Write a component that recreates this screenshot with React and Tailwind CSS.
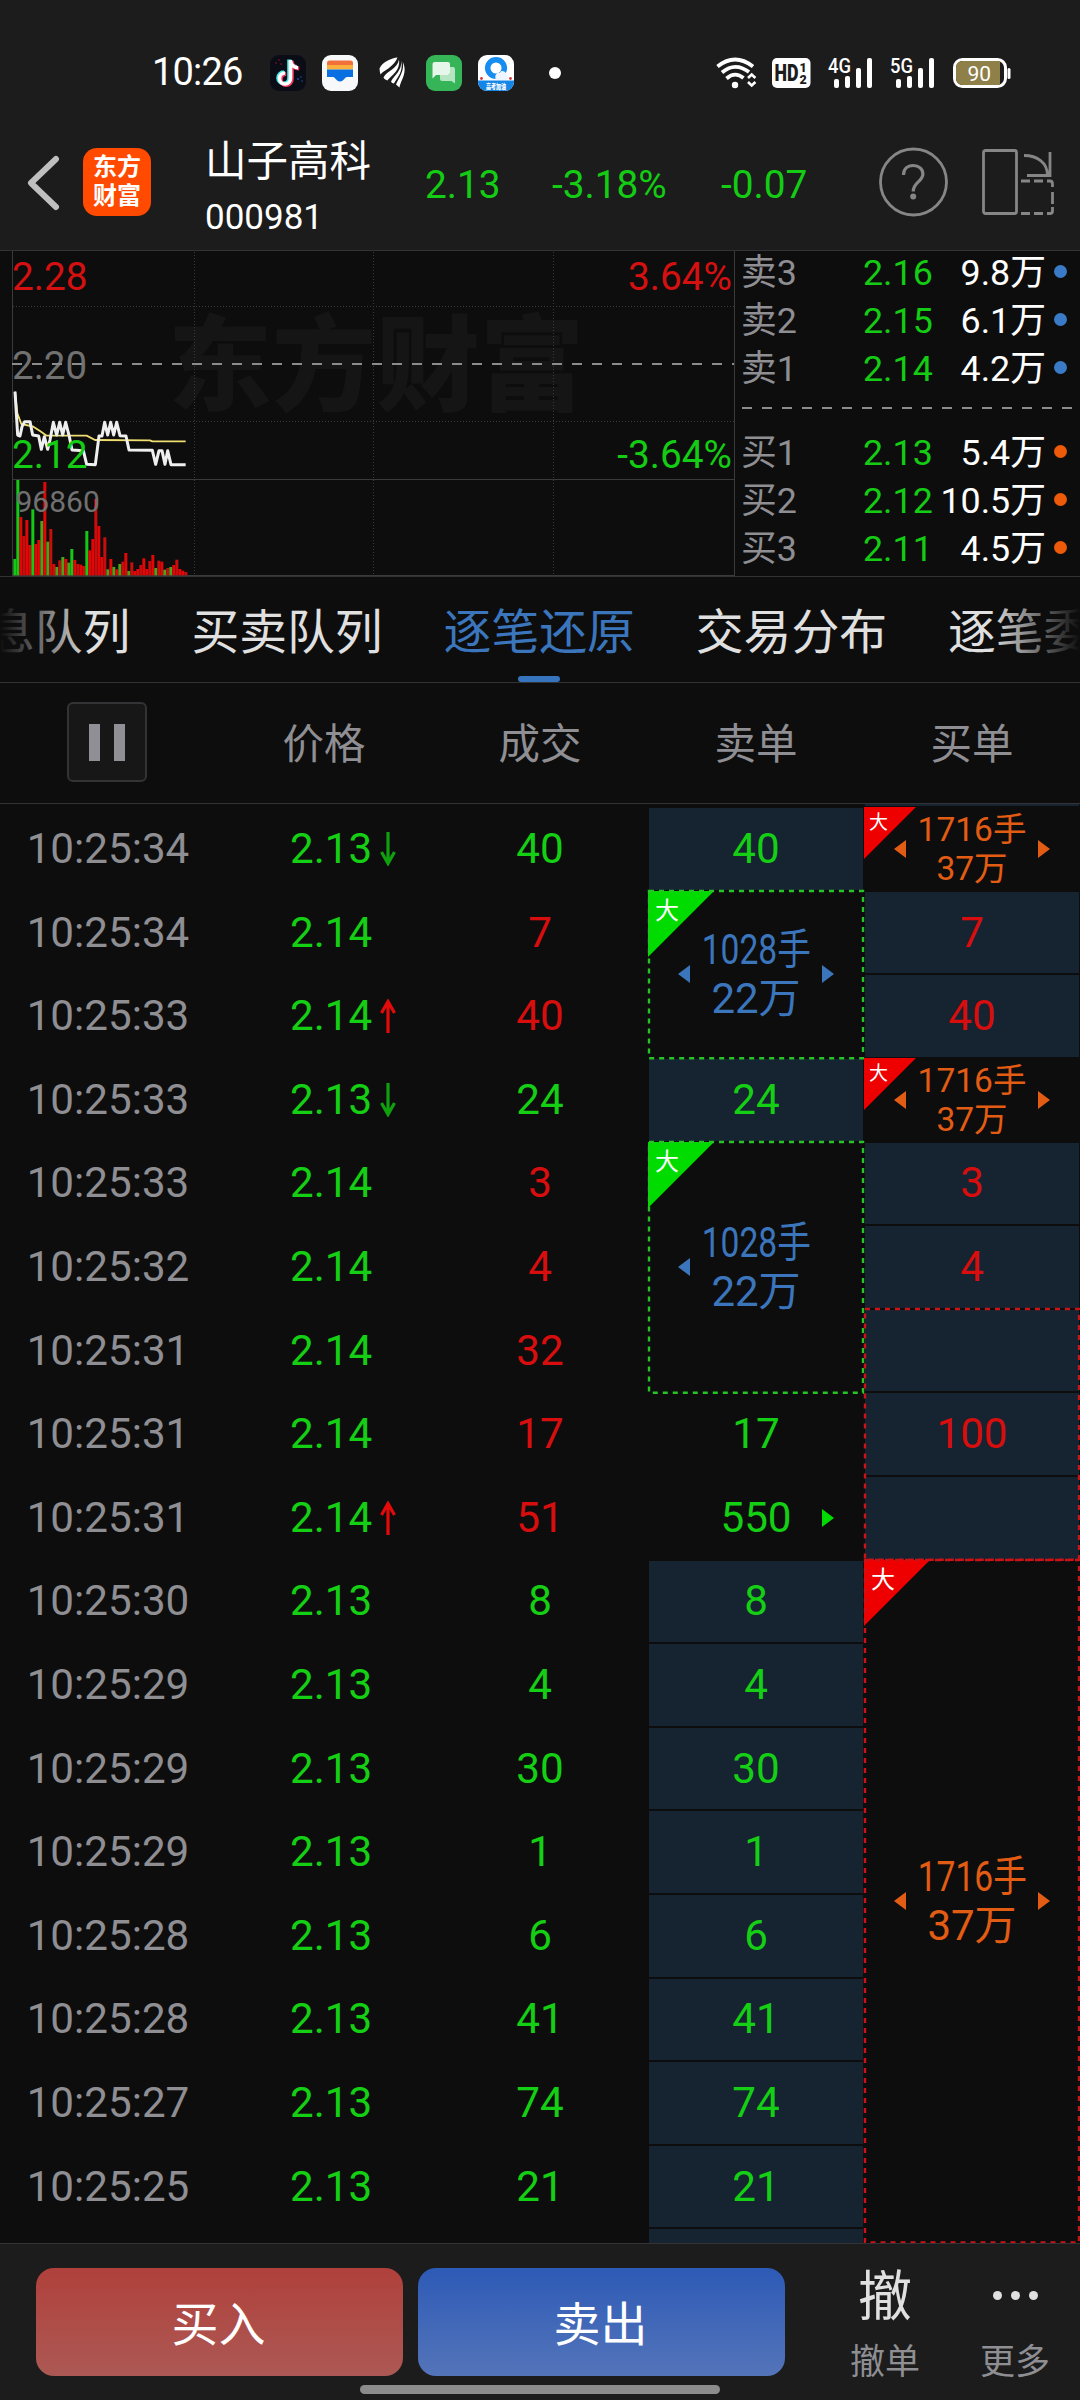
import React from "react";

const VOLUME = [
  ["g", 957], ["g", 720], ["r", 831], ["r", 888], ["r", 840], ["r", 915], ["g", 808], ["r", 912], ["r", 900], ["g", 843],
  ["r", 726], ["g", 905], ["r", 867], ["r", 972], ["g", 981], ["r", 961], ["g", 951], ["r", 957], ["g", 968], ["g", 927],
  ["r", 960], ["r", 972], ["r", 974], ["r", 978], ["g", 873], ["r", 931], ["r", 897], ["r", 777], ["r", 858], ["r", 951],
  ["r", 892], ["g", 988], ["r", 957], ["g", 981], ["r", 988], ["g", 972], ["r", 965], ["r", 939], ["g", 993], ["r", 967],
  ["r", 993], ["r", 987], ["r", 975], ["r", 955], ["r", 987], ["r", 963], ["r", 945], ["g", 984], ["r", 962], ["r", 965],
  ["g", 989], ["r", 984], ["g", 981], ["r", 975], ["r", 959], ["r", 987], ["r", 992], ["r", 996],
];

const TRADES = [
  ["10:25:34", "2.13", "down", "40", "g"],
  ["10:25:34", "2.14", "", "7", "r"],
  ["10:25:33", "2.14", "up", "40", "r"],
  ["10:25:33", "2.13", "down", "24", "g"],
  ["10:25:33", "2.14", "", "3", "r"],
  ["10:25:32", "2.14", "", "4", "r"],
  ["10:25:31", "2.14", "", "32", "r"],
  ["10:25:31", "2.14", "", "17", "r"],
  ["10:25:31", "2.14", "up", "51", "r"],
  ["10:25:30", "2.13", "", "8", "g"],
  ["10:25:29", "2.13", "", "4", "g"],
  ["10:25:29", "2.13", "", "30", "g"],
  ["10:25:29", "2.13", "", "1", "g"],
  ["10:25:28", "2.13", "", "6", "g"],
  ["10:25:28", "2.13", "", "41", "g"],
  ["10:25:27", "2.13", "", "74", "g"],
  ["10:25:25", "2.13", "", "21", "g"],
];

function Signal({ label }) {
  return (
    <svg width="46" height="32" viewBox="0 0 46 32" className="shrink-0">
      <text x="0" y="15.500" fontSize="19.500" fill="#fff" fontWeight="500" textLength="23" lengthAdjust="spacingAndGlyphs">{label}</text>
      <g fill="#fff">
        <rect x="6" y="22" width="5" height="9" rx="2" />
        <rect x="17" y="19" width="5" height="12" rx="2" />
        <rect x="28" y="11" width="5" height="20" rx="2" />
        <rect x="39" y="1" width="5" height="30" rx="2" />
      </g>
    </svg>
  );
}

function StatusBar() {
  return (
    <div className="relative flex h-[110px] items-center pt-[35px]">
      <div className="ml-[152px] w-[118px] text-[38px] leading-9 tracking-[-0.8px] text-white"><span className="relative -top-px">10:26</span></div>
      <svg width="36" height="36" viewBox="0 0 36 36" className="mr-4 shrink-0">
        <rect width="36" height="36" rx="9" fill="#0a0c16" />
        <g fill="none" strokeWidth="4.200">
          <path d="M20.500 5v18.500a5.500 5.500 0 1 1-5.500-5.500M20.500 6c.8 4.500 3.500 6.500 7.500 6.700" stroke="#3be8e6" transform="translate(-1.200 -.6)" />
          <path d="M20.500 5v18.500a5.500 5.500 0 1 1-5.500-5.500M20.500 6c.8 4.500 3.500 6.500 7.500 6.700" stroke="#f5355b" transform="translate(1.200 .8)" />
          <path d="M20.500 5v18.500a5.500 5.500 0 1 1-5.500-5.500M20.500 6c.8 4.500 3.500 6.500 7.500 6.700" stroke="#fff" strokeWidth="3.600" />
        </g>
        <g fill="#a01626"><circle cx="6" cy="8" r=".8" /><circle cx="9" cy="5" r=".8" /><circle cx="11" cy="9" r=".8" /></g>
        <g fill="#1d55b0"><circle cx="28" cy="24" r=".9" /><circle cx="31" cy="22" r=".8" /><circle cx="32" cy="26" r=".8" /></g>
      </svg>
      <svg width="36" height="36" viewBox="0 0 36 36" className="mr-[21px] shrink-0">
        <rect width="36" height="36" rx="9" fill="#f7f8fa" />
        <path d="M5 8q0-2.500 2.500-2.500h21q2.500 0 2.500 2.500v2H5z" fill="#f2703a" />
        <rect x="5" y="10" width="26" height="4.500" fill="#fbb03b" />
        <path d="M5 14.500h26V22h-6c-2.500 0-3 4.500-7 4.500S13.500 22 11 22H5z" fill="#0a6fe0" />
      </svg>
      <svg width="26" height="31" viewBox="0 0 26 31" className="mr-[21px] shrink-0">
        <path d="M18.500.5C13 1 3 5 .5 11.500c0 2 .5 4 1 6C5 13 15 10 18.500.5z" fill="#fff" />
        <path d="M20 2.500C18.500 12 8 13.500 4.500 20.500c1 1.800 2.500 2.500 4 3C12 18.500 21.500 14 20 2.500z" fill="#fff" />
        <path d="M22 3.500c1.500 9.500-6.500 14.500-10 21 1 1.500 1.500 1.700 3 2C18 21 25 14 22 3.500z" fill="#fff" />
        <path d="M23.800 5c1.500 9-3.500 15-6.800 22.500l3.500 3C21.500 23 29 16 23.800 5z" fill="#fff" />
      </svg>
      <svg width="36" height="36" viewBox="0 0 36 36" className="mr-4 shrink-0">
        <rect width="36" height="36" rx="9" fill="#36b558" />
        <path d="M9 7h13q2 0 2 2v9q0 2-2 2H10l-3.500 3.500V9q0-2 2.500-2z" fill="#e6f6ea" />
        <path d="M24 12h3q2 0 2 2v14.500L25.500 26H16q-2 0-2-2v-4h8q2 0 2-2z" fill="#b5e5c1" />
      </svg>
      <svg width="36" height="36" viewBox="0 0 36 36" className="shrink-0">
        <defs><clipPath id="browser"><rect width="36" height="36" rx="9" /></clipPath></defs>
        <g clipPath="url(#browser)">
          <rect width="36" height="36" fill="#fff" />
          <circle cx="18" cy="13" r="8.300" fill="none" stroke="#168df0" strokeWidth="5.500" />
          <path d="M18 25c-2-5 1-8 4-7 1-4 8-2 8 7z" fill="#eef5fc" />
          <rect y="25.500" width="36" height="11" fill="#1386e8" />
          <circle cx="3.500" cy="23.500" r="1.400" fill="#d23a3a" /><circle cx="32.500" cy="23.500" r="1.400" fill="#d23a3a" />
          <text x="8" y="33.500" fontSize="7" fontWeight="900" fill="#fff" textLength="20" lengthAdjust="spacingAndGlyphs">高考加油</text>
        </g>
      </svg>
      <div className="ml-[35px] size-3 rounded-full bg-white" />
      <svg width="42" height="32" viewBox="0 0 42 32" className="ml-[155px] shrink-0">
        <g fill="none" stroke="#fff" strokeWidth="3.800">
          <path d="M1.500 9.500Q19 -4.500 37 9.500" />
          <path d="M6 15.500Q19 4.500 33 15" />
          <path d="M10.500 21.500Q19 14 27.500 21" />
          <path d="M32 21l3.700-3.500L39.400 21M32 25l3.700 3.500L39.400 25" strokeWidth="2.600" />
        </g>
        <circle cx="19" cy="28" r="3.200" fill="#fff" />
      </svg>
      <svg width="40" height="32" viewBox="0 0 40 32" className="ml-[13px] shrink-0">
        <rect x="1" y="1" width="38.500" height="30" rx="5" fill="#fff" />
        <g fill="#1c1c1c" fontWeight="900">
          <text x="3.500" y="24" fontSize="23" textLength="24" lengthAdjust="spacingAndGlyphs">HD</text>
          <text x="28.500" y="14.500" fontSize="12.500">1</text>
          <text x="28.500" y="26.500" fontSize="12.500">2</text>
        </g>
      </svg>
      <div className="ml-[17px] flex w-[124px] gap-4"><Signal label="4G" /><Signal label="5G" /></div>
      <svg width="60" height="32" viewBox="0 0 60 32" className="shrink-0">
        <rect x="2.500" y="2.500" width="51" height="27" rx="8" fill="none" stroke="#fff" strokeWidth="3" />
        <path d="M48 4H11q-7 0-7 7v10q0 7 7 7h37z" fill="#8f7f49" />
        <rect x="55.500" y="11" width="3" height="11" rx="1.500" fill="#fff" />
        <text x="15.500" y="23.500" fontSize="21" fill="#fff">90</text>
      </svg>
    </div>
  );
}

function TitleBar() {
  return (
    <div className="flex h-[140px] items-start text-[38.8px] text-[#14cc14]">
      <svg width="34" height="58" viewBox="0 0 34 58" className="ml-[26px] mt-[44px] shrink-0">
        <path d="M30 5L5 29l25 24" fill="none" stroke="#bfbfbf" strokeWidth="6" strokeLinecap="round" strokeLinejoin="round" />
      </svg>
      <div className="ml-[23px] mt-[38px] h-[68px] w-[68px] shrink-0 rounded-[14px] bg-[#ff4a00] pt-[5px] text-center text-[24px] font-bold leading-[29px] text-white">
        <div>东方</div><div>财富</div>
      </div>
      <div className="ml-[54px] w-[220px] shrink-0 text-white">
        <div className="mt-[27px] text-[41.5px] leading-[50px]">山子高科</div>
        <div className="mt-[11px] text-[35px] leading-[40px]">000981</div>
      </div>
      <div className="mt-[53px] flex leading-[44px]">
        <div className="w-[127px] shrink-0">2.13</div>
        <div className="w-[169px] shrink-0">-3.18%</div>
        <div className="w-[158px] shrink-0">-0.07</div>
      </div>
      <svg width="70" height="70" viewBox="0 0 70 70" className="mt-[37px] shrink-0" fill="none" stroke="#868686">
        <circle cx="34.500" cy="35" r="33" strokeWidth="2.800" />
        <path d="M24.500 28c0-6 4-9.500 9.700-9.500s9.700 3.500 9.700 8.500c0 7.500-9.700 8-9.700 17.500" strokeWidth="3.200" />
        <circle cx="34.200" cy="49.500" r="3" fill="#868686" stroke="none" />
      </svg>
      <svg width="76" height="70" viewBox="0 0 76 70" className="ml-[31px] mt-[37px] shrink-0" fill="none" stroke="#868686" strokeWidth="2.800">
        <rect x="3.500" y="3.500" width="33" height="63" rx="2" />
        <path d="M44 8.500c13 0 23.500 7 23.500 20M70 5v23.500H47" />
        <path d="M41 34h9M54 34h9M41 66.500h9M54 66.500h9M67 34h3q2.500 0 2.500 3v3M72.500 45v12M72.500 60v4q0 2.500-2.500 2.500h-3" />
      </svg>
    </div>
  );
}

function Chart() {
  return (
    <svg width="735" height="326" viewBox="0 0 735 326" className="shrink-0">
      <text x="168" y="152" fontSize="104" fontWeight="900" fill="#151515">东方财富</text>
      <g fill="none" stroke="#3a3a3c" strokeWidth="1">
        <path d="M13 55.500H734M13 170.500H734M194.500 1V324M373.500 1V324M553.500 1V324" strokeDasharray="1 2" />
        <path d="M12.500 0V325M734.500 0V325M13 228.500H734M13 324.500H734" />
      </g>
      <text x="12" y="127.500" fontSize="38.500" fill="#717171">2.20</text>
      <path d="M12 113H734" stroke="#8c8c8c" strokeWidth="2" strokeDasharray="10 10" />
      <g transform="translate(0 -11) scale(.33333)" fill="none" strokeLinejoin="round">
        <path d="M45 455L52 520L64 552L100 560L120 573L140 587H260L285 600L450 601L457 604H557" stroke="#f0de70" strokeWidth="5.500" />
        <path d="M45 455L53 585L60 588L66 560L74 545H90L98 585L116 588L124 628L133 590L143 628L150 600L160 547L170 585L179 547L188 585L197 547L208 590L216 630L250 632L260 673L286 674L297 588H306L314 547L323 585L332 547L341 585L350 547L360 587L378 588L387 630L457 631L467 673L477 632H486L495 673L503 632L513 674H557" stroke="#efefef" strokeWidth="9" />
        {VOLUME.map(([c, top], i) => (
          <rect key={i} x={40 + 9 * i} y={top} width={9} height={1006 - top} fill={c === "g" ? (i < 2 || i === 6 || i === 24 || i === 19 ? "#16c816" : "#4ba31c") : i % 3 ? "#e20606" : "#c80d0d"} />
        ))}
      </g>
      <text x="12" y="39" fontSize="38.800" fill="#d41010">2.28</text>
      <text x="12" y="217" fontSize="38.800" fill="#14cc14">2.12</text>
      <text x="732" y="39" fontSize="38.800" fill="#d41010" textAnchor="end">3.64%</text>
      <text x="732" y="217" fontSize="38.800" fill="#14cc14" textAnchor="end">-3.64%</text>
      <text x="15.500" y="260.500" fontSize="30" fill="#717171">96860</text>
    </svg>
  );
}

function Quote({ name, price, amount, buy }) {
  return (
    <div className="flex h-12 items-center leading-[48px]">
      <div className="w-[122px] text-[#8e8e93]">{name}</div>
      <div className="w-[70px] text-[#14cc14]">{price}</div>
      <div className="-ml-4 w-[129px] text-right text-white">{amount}</div>
      <div className={buy ? "-mt-1 ml-[8px] size-[13px] rounded-full bg-[#ec5a0a]" : "-mt-1 ml-[8px] size-[13px] rounded-full bg-[#3a7bc8]"} />
    </div>
  );
}

function OrderBook() {
  return (
    <div className="flex-1 pl-[6px] text-[35.8px]">
      <div className="-mt-[2px]">
        <Quote name="卖3" price="2.16" amount="9.8万" />
        <Quote name="卖2" price="2.15" amount="6.1万" />
        <Quote name="卖1" price="2.14" amount="4.2万" />
      </div>
      <svg width="331" height="36" viewBox="0 0 331 36" className="block">
        <path d="M1 15H331" stroke="#8c8c8c" strokeWidth="2" strokeDasharray="10 10" />
      </svg>
      <Quote name="买1" price="2.13" amount="5.4万" buy />
      <Quote name="买2" price="2.12" amount="10.5万" buy />
      <Quote name="买3" price="2.11" amount="4.5万" buy />
    </div>
  );
}

function Outline({ stroke }) {
  return (
    <svg className="pointer-events-none absolute inset-0 h-full w-full overflow-visible">
      <rect x="1" y="0" width="100%" height="100%" fill="none" stroke={stroke} strokeWidth="2.400" strokeDasharray="5 5" />
    </svg>
  );
}

function Caret({ dir, className }) {
  return (
    <svg width="12" height="18" viewBox="0 0 12 18" className={className}>
      <path d={dir === "left" ? "M12 0v18L0 9z" : "M0 0v18l12-9z"} fill="currentColor" />
    </svg>
  );
}

function Corner({ size, fill }) {
  return (
    <div className="absolute left-0 top-0">
      <svg width={size} height={size} viewBox="0 0 10 10" className="block"><path d="M0 0H10L0 10z" fill={fill} /></svg>
      <div className={size > 60 ? "absolute left-[7px] top-[8px] text-[24px] leading-[24px] text-white" : "absolute left-[5px] top-[6px] text-[19px] leading-[19px] text-white"}>大</div>
    </div>
  );
}

function BigOrder({ hands, value, left = true, right = true, small, className, fill, outline }) {
  return (
    <div className={className}>
      <Corner size={small ? 52 : 66} fill={fill} />
      {outline && <Outline stroke={outline} />}
      <Caret dir="left" className={left ? "shrink-0" : "invisible shrink-0"} />
      <div className={small ? "flex w-[132px] flex-col items-center text-[33.5px] leading-[39px]" : "flex w-[132px] flex-col items-center text-[42px] leading-[49px]"}>
        <div className={small ? "whitespace-nowrap" : "scale-x-[0.8] whitespace-nowrap"}>{hands}</div>
        <div>{value}</div>
      </div>
      <Caret dir="right" className={right ? "shrink-0" : "invisible shrink-0"} />
    </div>
  );
}

function Arrow({ up }) {
  return (
    <svg width="16" height="34" viewBox="0 0 16 34" className={up ? "ml-[8px] rotate-180 text-[#e40a0a]" : "ml-[8px] text-[#0f9f0f]"}>
      <path d="M8 0V31M1.500 20L8 31.500L14.500 20" fill="none" stroke="currentColor" strokeWidth="3.200" />
    </svg>
  );
}

function TradeTable() {
  const plain = "m-px flex items-center justify-center bg-[#162331]";
  return (
    <div className="relative flex h-[1439px] overflow-hidden pt-[3.3px] text-[42.2px] leading-[50px]">
      <div className="absolute right-px top-0 h-[2px] w-[214px] bg-[#162331]" />
      <div className="w-[648px] shrink-0">
        {TRADES.map(([time, price, dir, qty, c], i) => (
          <div key={i} className="grid h-[83.6px] grid-cols-3 items-center">
            <div className="text-center text-[#8e8e93]">{time}</div>
            <div className="flex items-center pl-[74px] text-[#14cf14]">
              {price}{dir && <Arrow up={dir === "up"} />}
            </div>
            <div className={c === "g" ? "text-center text-[#14cf14]" : "text-center text-[#d80e0e]"}>{qty}</div>
          </div>
        ))}
      </div>
      <div className="grid w-[216px] shrink-0 auto-rows-[83.6px] text-[#14cf14]">
        <div className={plain}>40</div>
        <BigOrder hands="1028手" value="22万" fill="#00dc00" outline="#26c426" className="relative row-span-2 mr-[2px] flex items-center justify-center pl-[2px] text-[#3b76bd]" />
        <div className={plain}>24</div>
        <BigOrder hands="1028手" value="22万" right={false} fill="#00dc00" outline="#26c426" className="relative row-span-3 mr-[2px] flex items-center justify-center pl-[2px] text-[#3b76bd]" />
        <div className="flex items-center justify-center">17</div>
        <div className="relative flex items-center justify-center">550<Caret dir="right" className="absolute right-[30px] text-[#00dc00]" /></div>
        {["8", "4", "30", "1", "6", "41", "74", "21", ""].map((q, i) => <div key={i} className={plain}>{q}</div>)}
      </div>
      <div className="grid w-[216px] shrink-0 auto-rows-[83.6px] text-[#d80e0e]">
        <BigOrder small hands="1716手" value="37万" fill="#ee0000" className="relative flex items-center justify-center text-[#e35c14]" />
        <div className={plain}>7</div>
        <div className={plain}>40</div>
        <BigOrder small hands="1716手" value="37万" fill="#ee0000" className="relative flex items-center justify-center text-[#e35c14]" />
        <div className={plain}>3</div>
        <div className={plain}>4</div>
        <div className="relative row-span-3 mr-[2px] grid auto-rows-[83.6px]">
          <div className="my-px ml-px -mr-px bg-[#162331]" />
          <div className="my-px ml-px -mr-px flex items-center justify-center bg-[#162331]">100</div>
          <div className="my-px ml-px -mr-px bg-[#162331]" />
          <Outline stroke="#cc1216" />
        </div>
        <BigOrder hands="1716手" value="37万" fill="#ee0000" outline="#cc1216" className="relative mr-[2px] flex h-[682.5px] items-center justify-center pl-[2px] text-[#e35c14]" />
      </div>
    </div>
  );
}

function Tabs() {
  return (
    <div className="relative flex h-[105px] overflow-hidden text-[47.8px] leading-[112px] text-[#e0e0e0]">
      <div className="-ml-[13px] flex shrink-0 gap-[61px] whitespace-nowrap">
        <div>息队列</div>
        <div>买卖队列</div>
        <div className="flex flex-col items-center text-[#3b76bd]">
          <div className="h-[99px]">逐笔还原</div>
          <div className="h-[6px] w-[42px] rounded-[3px] bg-[#3674bd]" />
        </div>
        <div>交易分布</div>
        <div>逐笔委托</div>
      </div>
      <div className="absolute inset-y-0 left-0 w-[90px] bg-linear-to-r from-[#0d0d0d] to-transparent" />
      <div className="absolute inset-y-0 right-0 w-[90px] bg-linear-to-l from-[#0d0d0d] to-transparent" />
    </div>
  );
}

function Footer() {
  return (
    <div className="h-[157px] border-t border-[#333335] bg-[#1c1c1c]">
      <div className="flex h-[141px] pt-6">
        <div className="ml-9 h-[108px] w-[367px] rounded-[18px] bg-linear-to-b from-[#b0403b] to-[#ac5854] text-center text-[47px] leading-[113px] text-white"><span className="relative -left-px">买入</span></div>
        <div className="ml-[15px] h-[108px] w-[367px] rounded-[18px] bg-linear-to-b from-[#2d5ab6] to-[#5474b9] text-center text-[47px] leading-[113px] text-white"><span className="relative -left-px">卖出</span></div>
        <div className="ml-[35px] flex w-[130px] flex-col items-center">
          <div className="pt-px text-[54px] leading-[58px] text-[#e0e0e0]">撤</div>
          <div className="mt-[16px] text-[35px] leading-10 text-[#8e8e93]">撤单</div>
        </div>
        <div className="flex w-[130px] flex-col items-center">
          <div className="flex h-[59px] items-center gap-[9px] pb-[4px]">
            <div className="size-[9px] rounded-full bg-[#e0e0e0]" />
            <div className="size-[9px] rounded-full bg-[#e0e0e0]" />
            <div className="size-[9px] rounded-full bg-[#e0e0e0]" />
          </div>
          <div className="mt-[16px] text-[35px] leading-10 text-[#8e8e93]">更多</div>
        </div>
      </div>
      <div className="mx-auto h-[9px] w-[360px] rounded-full bg-[#8c8c8c]" />
    </div>
  );
}

export default function App() {
  return (
    <div className="h-[2400px] w-[1080px] overflow-hidden bg-[#0d0d0d] font-['Roboto','Noto_Sans_CJK_SC',sans-serif] font-normal">
      <div className="h-[250px] bg-[#1c1c1c]">
        <StatusBar />
        <TitleBar />
      </div>
      <div className="flex h-[327px] border-y border-[#333335]">
        <Chart />
        <OrderBook />
      </div>
      <Tabs />
      <div className="grid h-[122px] grid-cols-5 items-center border-y border-[#333335] text-center text-[41.5px] leading-[50px] text-[#8e8e93]">
        <div className="ml-[67px] -mt-[2px] flex size-20 items-center justify-center gap-[14px] rounded-[6px] border-2 border-[#333335] bg-[#171717]">
          <div className="h-[37px] w-[11px] bg-[#918f96]" />
          <div className="h-[37px] w-[11px] bg-[#918f96]" />
        </div>
        <div className="pt-1">价格</div>
        <div className="pt-1">成交</div>
        <div className="pt-1">卖单</div>
        <div className="pt-1">买单</div>
      </div>
      <TradeTable />
      <Footer />
    </div>
  );
}
